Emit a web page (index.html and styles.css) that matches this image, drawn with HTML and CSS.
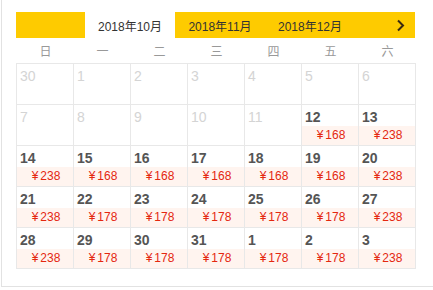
FILE: index.html
```html
<!DOCTYPE html>
<html lang="zh">
<head>
<meta charset="utf-8">
<link rel="stylesheet" href="styles.css">
</head>
<body>
<div class="frame">
  <div class="cal">
    <div class="bar">
      <div class="tabs">
        <div class="tab active">2018年10月</div>
        <div class="tab">2018年11月</div>
        <div class="tab">2018年12月</div>
      </div>
      <div class="next">
        <svg width="9" height="13" viewBox="0 0 9 13"><path d="M2 1.5 L7 6.5 L2 11.5" fill="none" stroke="#3a2a10" stroke-width="2"/></svg>
      </div>
    </div>
    <div class="week">
      <span>日</span><span>一</span><span>二</span><span>三</span><span>四</span><span>五</span><span>六</span>
    </div>
    <div class="grid">
      <div class="cell off"><div class="num">30</div></div>
      <div class="cell off"><div class="num">1</div></div>
      <div class="cell off"><div class="num">2</div></div>
      <div class="cell off"><div class="num">3</div></div>
      <div class="cell off"><div class="num">4</div></div>
      <div class="cell off"><div class="num">5</div></div>
      <div class="cell off"><div class="num">6</div></div>

      <div class="cell off"><div class="num">7</div></div>
      <div class="cell off"><div class="num">8</div></div>
      <div class="cell off"><div class="num">9</div></div>
      <div class="cell off"><div class="num">10</div></div>
      <div class="cell off"><div class="num">11</div></div>
      <div class="cell"><div class="num">12</div><div class="price">¥<i>168</i></div></div>
      <div class="cell"><div class="num">13</div><div class="price">¥<i>238</i></div></div>

      <div class="cell"><div class="num">14</div><div class="price">¥<i>238</i></div></div>
      <div class="cell"><div class="num">15</div><div class="price">¥<i>168</i></div></div>
      <div class="cell"><div class="num">16</div><div class="price">¥<i>168</i></div></div>
      <div class="cell"><div class="num">17</div><div class="price">¥<i>168</i></div></div>
      <div class="cell"><div class="num">18</div><div class="price">¥<i>168</i></div></div>
      <div class="cell"><div class="num">19</div><div class="price">¥<i>168</i></div></div>
      <div class="cell"><div class="num">20</div><div class="price">¥<i>238</i></div></div>

      <div class="cell"><div class="num">21</div><div class="price">¥<i>238</i></div></div>
      <div class="cell"><div class="num">22</div><div class="price">¥<i>178</i></div></div>
      <div class="cell"><div class="num">23</div><div class="price">¥<i>178</i></div></div>
      <div class="cell"><div class="num">24</div><div class="price">¥<i>178</i></div></div>
      <div class="cell"><div class="num">25</div><div class="price">¥<i>178</i></div></div>
      <div class="cell"><div class="num">26</div><div class="price">¥<i>178</i></div></div>
      <div class="cell"><div class="num">27</div><div class="price">¥<i>238</i></div></div>

      <div class="cell"><div class="num">28</div><div class="price">¥<i>238</i></div></div>
      <div class="cell"><div class="num">29</div><div class="price">¥<i>178</i></div></div>
      <div class="cell"><div class="num">30</div><div class="price">¥<i>178</i></div></div>
      <div class="cell"><div class="num">31</div><div class="price">¥<i>178</i></div></div>
      <div class="cell"><div class="num">1</div><div class="price">¥<i>178</i></div></div>
      <div class="cell"><div class="num">2</div><div class="price">¥<i>178</i></div></div>
      <div class="cell"><div class="num">3</div><div class="price">¥<i>238</i></div></div>
    </div>
  </div>
</div>
</body>
</html>
```
FILE: styles.css
```css
html, body {
  margin: 0;
  padding: 0;
  background: #fff;
}
body {
  font-family: "Liberation Sans", "Noto Sans CJK SC", sans-serif;
}
.frame {
  margin-left: 1px;
  width: 432px;
  height: 287px;
  box-sizing: border-box;
  border-left: 1px solid #e2e2e2;
  border-bottom: 1px solid #e2e2e2;
  padding: 12px 0 0 14px;
}
.cal {
  width: 400px;
}
.bar {
  display: flex;
  align-items: center;
  justify-content: space-between;
  height: 26px;
  width: 399px;
  background: #fecb00;
}
.tabs {
  display: flex;
  height: 100%;
  padding-left: 69px;
}
.tab {
  width: 90px;
  display: flex;
  align-items: center;
  justify-content: center;
  font-size: 12px;
  color: #333;
}
.tab.active {
  background: #fff;
}
.next {
  display: flex;
  align-items: center;
  padding-right: 10px;
}
.week {
  display: grid;
  grid-template-columns: repeat(7, 57px);
  height: 25px;
  align-items: center;
  padding-left: 1px;
}
.week span {
  text-align: center;
  font-size: 12px;
  color: #999;
}
.grid {
  display: grid;
  grid-template-columns: repeat(7, 57px);
  border-left: 1px solid #e8e8e8;
  border-top: 1px solid #e8e8e8;
  width: 399px;
}
.cell {
  box-sizing: border-box;
  height: 41px;
  border-right: 1px solid #e8e8e8;
  border-bottom: 1px solid #e8e8e8;
  display: flex;
  flex-direction: column;
}
.num {
  padding: 3px 0 0 3px;
  height: 18px;
  line-height: 18px;
  font-size: 14px;
  font-weight: bold;
  color: #555;
}
.cell.off .num {
  font-weight: normal;
  color: #d4d4d4;
}
.price {
  margin-top: auto;
  height: 19px;
  line-height: 19px;
  background: #fff4ef;
  color: #e4270f;
  font-size: 12px;
  text-align: center;
  padding-left: 2px;
}
.price i {
  font-style: normal;
  margin-left: 2px;
}
```
